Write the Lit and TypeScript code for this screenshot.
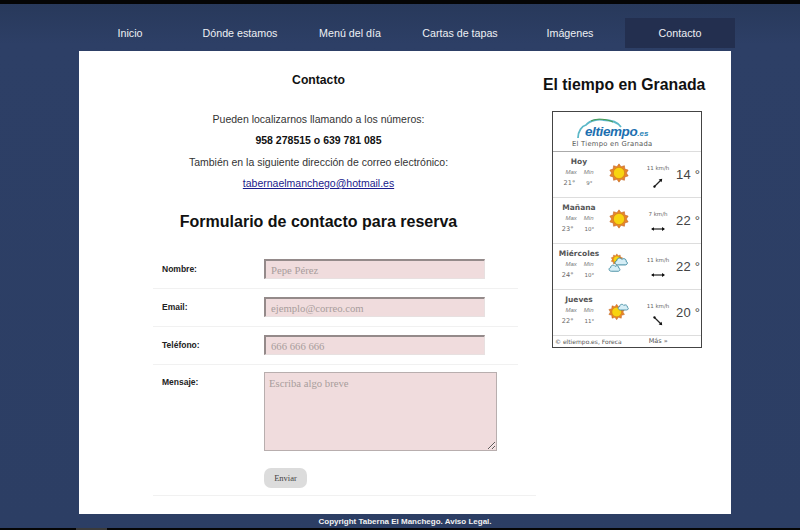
import { LitElement, html, css, svg } from "lit";
import { customElement } from "lit/decorators.js";

const sun = svg`<g>
  <polygon points="12,1 14.5,4.5 18.5,3.2 19,7.3 23,8.5 20.9,12 23,15.5 19,16.7 18.5,20.8 14.5,19.5 12,23 9.500,19.500 5.500,20.800 5,16.700 1,15.500 3.100,12 1,8.500 5,7.300 5.500,3.200 9.500,4.500" fill="#e8862a" stroke="#b85a18" stroke-width=".6"/>
  <circle cx="12" cy="12" r="6.800" fill="#f8d410" stroke="#d07a18" stroke-width=".8"/></g>`;
const cloud = (x: number, y: number, s: number) => svg`<path transform="translate(${x} ${y}) scale(${s})" d="M5 14 C1 14 0 9 4 8 C4 4 9 3 11 6 C14 4 18 6 17 9 C20 10 19 14 16 14 Z" fill="#d6eef6" stroke="#2f7f98" stroke-width="1.300"/>`;
const arrow = (rot: number, len: number) => svg`<g transform="translate(12 6) rotate(${rot})"><path d="M${-len} 0H${len}" stroke="#222" stroke-width="1.200"/><path d="M${len + 1} 0L${len - 2} -2V2Z" fill="#111"/>${rot === 0 ? svg`<path d="M${-len - 1} 0L${-len + 2} -1.800V1.800Z" fill="#111"/>` : svg`<circle cx="${-len}" cy="0" r="1.200" fill="#111"/>`}</g>`;

@customElement("tiempo-widget")
class TiempoWidget extends LitElement {
  static styles = css`
    :host { display: block; width: 148px; height: 235px; border: 1px solid #444; background: #fff;
      font-family: "DejaVu Sans", sans-serif; color: #555; overflow: hidden; }
    .head { height: 40px; position: relative; display: flex; flex-direction: column; justify-content: flex-end; padding-left: 19px; box-sizing: border-box;
      background: linear-gradient(#aaa, #aaa) left bottom / 117px 1px no-repeat, linear-gradient(#ddd, #ddd) left bottom / 100% 1px no-repeat; }
    .logo { position: absolute; left: 0; top: 0; }
    .brand { position: absolute; left: 32px; top: 12px; font: italic bold 13.500px "Liberation Sans", sans-serif; color: #1c6fb0; letter-spacing: -.4px; white-space: nowrap; }
    .brand small { font-size: 8px; color: #2a86b8; letter-spacing: 0; }
    .sub { font-size: 6.800px; color: #555; letter-spacing: .25px; line-height: 11px; margin-bottom: 2px; white-space: nowrap; }
    .day { height: 46px; box-sizing: border-box; display: grid; grid-template-columns: 52px 27px 47px 22px; border-bottom: 1px solid #ddd; align-items: start; }
    .c1 { text-align: center; padding-top: 4px; }
    .name { font-size: 7.500px; font-weight: bold; color: #555; line-height: 11px; white-space: nowrap; }
    .mm { display: flex; justify-content: center; gap: 7px; font: italic 6px "Liberation Sans", sans-serif; color: #777; line-height: 7px; margin-top: 2px; padding-left: 1px; }
    .vals { display: flex; gap: 11px; font-size: 6.500px; color: #666; line-height: 9px; margin-top: 3px; justify-content: center; padding-right: 2px; }
    .vals span + span { font-size: 5.500px; }
    .ic { padding-top: 11px; display: flex; justify-content: center; }
    .wind { text-align: center; font-size: 5.500px; color: #666; padding: 12px 0 0 5px; line-height: 8px; white-space: nowrap; }
    .wind svg { display: block; margin: 5px auto 0; }
    .temp { font: 13px "Liberation Sans", sans-serif; color: #444; padding-top: 15px; margin-left: -3px; letter-spacing: .2px; white-space: nowrap; }
    .foot { display: flex; height: 10px; align-items: center; font-size: 6px; color: #555; padding-left: 2px; white-space: nowrap; }
    .foot span + span { margin-left: 27px; font-size: 6.500px; }
  `;
  days = [
    { n: "Hoy", a: "21°", b: "9°", i: 0, w: "11 km/h", r: -45, l: 5, t: "14 °" },
    { n: "Mañana", a: "23°", b: "10°", i: 0, w: "7 km/h", r: 0, l: 6, t: "22 °" },
    { n: "Miércoles", a: "24°", b: "10°", i: 1, w: "11 km/h", r: 0, l: 6, t: "22 °" },
    { n: "Jueves", a: "22°", b: "11°", i: 2, w: "11 km/h", r: 45, l: 5, t: "20 °" },
  ];
  icon(i: number) {
    if (i === 0) return sun;
    if (i === 1) return svg`<g transform="translate(2 -2) scale(.62)">${sun}</g>${cloud(6, 0, 0.85)}${cloud(-1, 9, 0.75)}`;
    return svg`<g transform="translate(-1 3) scale(.85)">${sun}</g>${cloud(10, 1, 0.7)}`;
  }
  render() {
    return html`
      <div class="head">
        <svg class="logo" width="110" height="30" viewBox="0 0 110 30"><path d="M25 26 C25 19 29 14 33 13 C37 8 46 7 50 8 C56 8 64 9 68 15" fill="none" stroke="#5cb8c8" stroke-width="1.800"/><path d="M38 9 C44 6 54 7 60 10" fill="none" stroke="#4a9a50" stroke-width="1"/></svg>
        <span class="brand">eltiempo<small>.es</small></span>
        <div class="sub">El Tiempo en Granada</div>
      </div>
      ${this.days.map((d) => html`<div class="day">
        <div class="c1"><div class="name">${d.n}</div>
          <div class="mm"><span>Max</span><span>Min</span></div>
          <div class="vals"><span>${d.a}</span><span>${d.b}</span></div></div>
        <div class="ic"><svg width="20" height="20" viewBox="0 0 24 24" overflow="visible">${this.icon(d.i)}</svg></div>
        <div class="wind">${d.w}<svg width="24" height="12" viewBox="0 0 24 12" overflow="visible">${arrow(d.r, d.l)}</svg></div>
        <div class="temp">${d.t}</div>
      </div>`)}
      <div class="foot"><span>© eltiempo.es, Foreca</span><span>Más »</span></div>
    `;
  }
}

@customElement("app-root")
export class AppRoot extends LitElement {
  static styles = css`
    :host { display: flex; flex-direction: column; height: 530px; box-sizing: border-box; overflow: hidden;
      border-top: 4px solid #050505;
      background: linear-gradient(#28395b 0, #2d3f66 40px, #2c3e64 100%);
      font-family: "Liberation Sans", Arial, sans-serif; color: #222; }
    nav { display: flex; padding: 14px 0 3px 75px; }
    nav a { width: 110px; height: 30px; box-sizing: border-box; padding-bottom: 1px; display: flex; align-items: center; justify-content: center; color: #eef0f4; font-size: 10.700px; text-decoration: none; }
    nav a.active { background: #232f4f; }
    main { margin-left: 79px; width: 652px; height: 463px; background: #fff; display: flex; flex: none; box-sizing: border-box; }
    .left { width: 479px; flex: none; display: flex; flex-direction: column; align-items: center; }
    h2 { font-size: 12.200px; line-height: 16px; margin: 21px 0 23px; color: #111; }
    p { margin: 0; height: 21.300px; line-height: 16px; font-size: 10.500px; color: #333; text-align: center; }
    p b { color: #111; }
    p a { color: #1a1a8c; }
    h1 { font-size: 16px; line-height: 20px; margin: 16px 0 27px; color: #111; }
    form { align-self: flex-start; margin-left: 74px; width: 383px; display: flex; flex-direction: column; }
    .row { display: grid; grid-template-columns: 111px auto; width: 365px; box-sizing: border-box; height: 38px; padding-top: 8px; border-bottom: 1px solid #f1f1f1; }
    .row.top { padding-top: 0; height: 30px; }
    label { font-size: 8.500px; font-weight: bold; color: #222; padding: 5px 0 0 9px; line-height: 11px; }
    input { width: 221px; height: 20px; box-sizing: border-box; padding: 0 5px; background: #f0dcdd; border: 1px solid #e8e0e0; border-top: 2px solid #948a8a; border-left: 2px solid #948a8a; font: 10.700px "Liberation Serif", serif; outline: none; }
    ::placeholder { color: #a89c9c; opacity: 1; }
    textarea { width: 233px; height: 79px; box-sizing: border-box; padding: 4px; margin: 0; background: #f0dcdd; border: 1px solid #b8aeae; font: 10.700px "Liberation Serif", serif; outline: none; display: block; }
    .area { display: grid; grid-template-columns: 111px auto; padding-top: 7px; }
    .send { padding: 17px 0 7px 111px; border-bottom: 1px solid #f1f1f1; }
    button { width: 43px; height: 20px; border: 0; border-radius: 7px; background: #dcdcdc; color: #444; font: 8.500px "Liberation Serif", serif; padding: 0; display: block; }
    aside { width: 188px; margin-left: -15px; flex: none; display: flex; flex-direction: column; align-items: flex-start; }
    aside h3 { font-size: 15.800px; line-height: 20px; margin: 24px 0 16px; color: #111; white-space: nowrap; }
    aside tiempo-widget { margin-left: 9px; }
    footer { text-align: center; font-size: 8px; font-weight: bold; line-height: 13px; padding: 1px 0 0 10px; color: #f2f2f2; }
    .strip { height: 2px; background: #050505; padding-left: 76px; }
    .strip i { display: block; width: 31px; height: 2px; background: #3a3a3a; }
  `;
  render() {
    const items = ["Inicio", "Dónde estamos", "Menú del día", "Cartas de tapas", "Imágenes", "Contacto"];
    return html`
      <nav>${items.map((t) => html`<a href="#" class=${t === "Contacto" ? "active" : ""}>${t}</a>`)}</nav>
      <main>
        <div class="left">
          <h2>Contacto</h2>
          <p>Pueden localizarnos llamando a los números:</p>
          <p><b>958 278515 o 639 781 085</b></p>
          <p>También en la siguiente dirección de correo electrónico:</p>
          <p><a href="#">tabernaelmanchego@hotmail.es</a></p>
          <h1>Formulario de contacto para reserva</h1>
          <form>
            <div class="row top"><label>Nombre:</label><input placeholder="Pepe Pérez" /></div>
            <div class="row"><label>Email:</label><input placeholder="ejemplo@correo.com" /></div>
            <div class="row"><label>Teléfono:</label><input placeholder="666 666 666" /></div>
            <div class="area"><label>Mensaje:</label><textarea placeholder="Escriba algo breve"></textarea></div>
            <div class="send"><button type="button">Enviar</button></div>
          </form>
        </div>
        <aside>
          <h3>El tiempo en Granada</h3>
          <tiempo-widget></tiempo-widget>
        </aside>
      </main>
      <footer>Copyright Taberna El Manchego. Aviso Legal.</footer>
      <div class="strip"><i></i></div>
    `;
  }
}
